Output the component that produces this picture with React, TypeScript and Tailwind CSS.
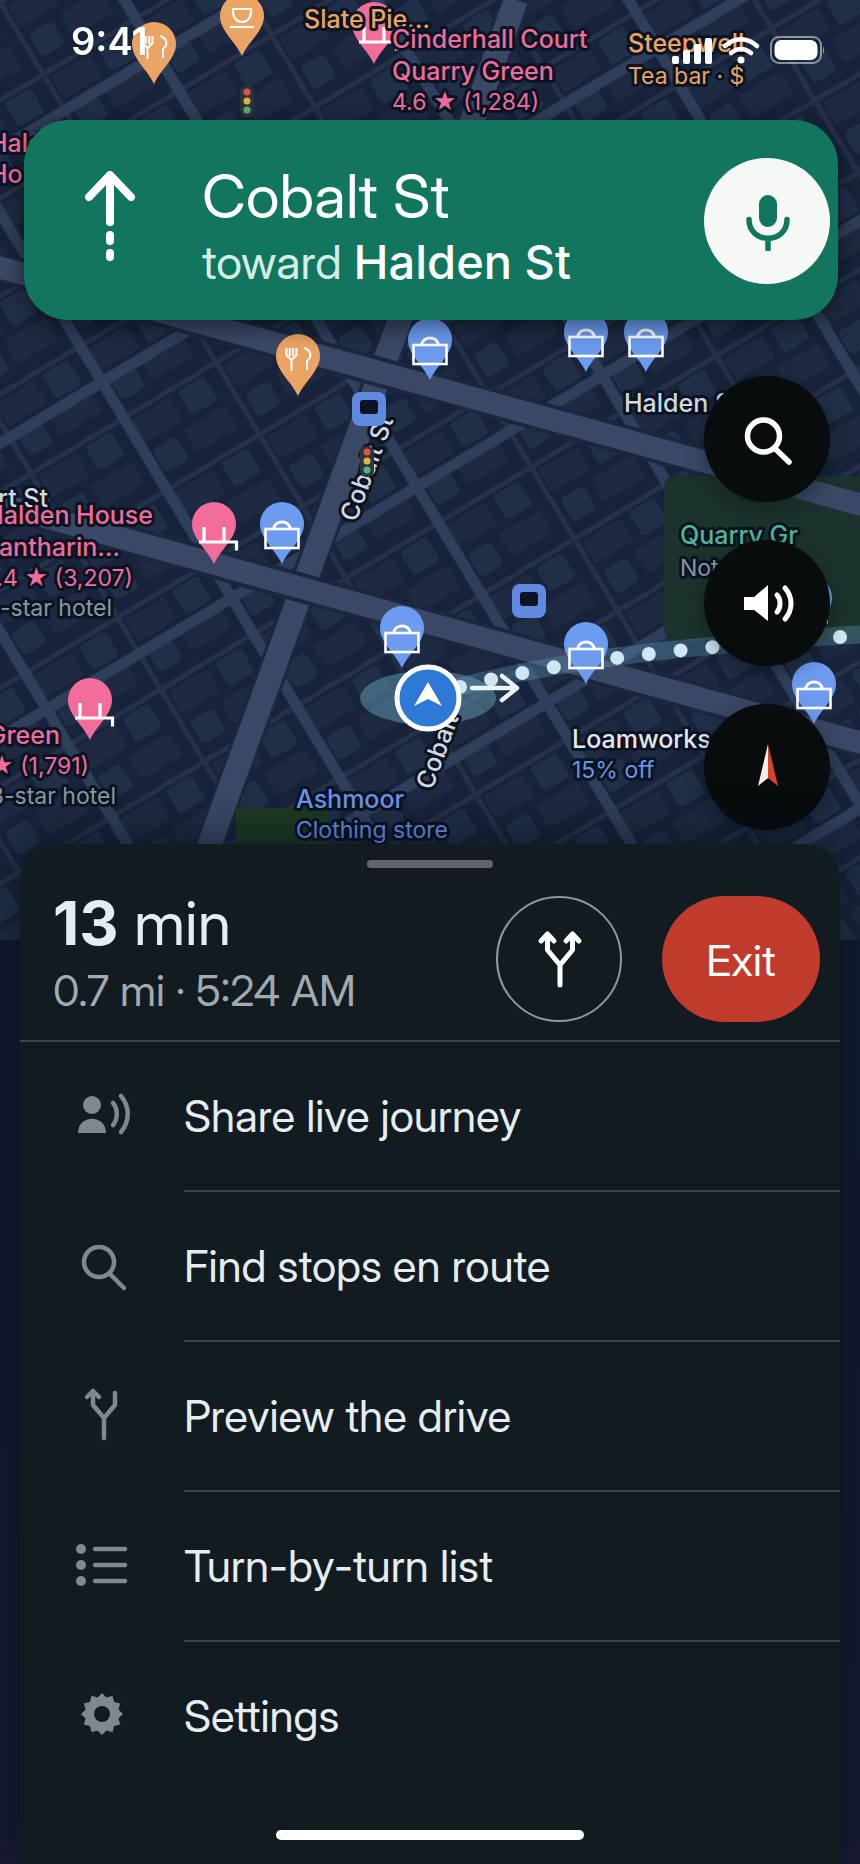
import React from "react";

type Pin = { kind: "food" | "cafe" | "hotel" | "shop"; x: number; y: number };

const PINS: Pin[] = [
  { kind: "food", x: 154, y: 22 },
  { kind: "cafe", x: 242, y: -6 },
  { kind: "hotel", x: 374, y: 2 },
  { kind: "food", x: 298, y: 334 },
  { kind: "shop", x: 430, y: 318 },
  { kind: "shop", x: 586, y: 310 },
  { kind: "shop", x: 646, y: 310 },
  { kind: "hotel", x: 214, y: 502 },
  { kind: "shop", x: 282, y: 502 },
  { kind: "shop", x: 402, y: 606 },
  { kind: "shop", x: 586, y: 622 },
  { kind: "shop", x: 810, y: 576 },
  { kind: "shop", x: 814, y: 662 },
  { kind: "hotel", x: 90, y: 678 },
];

const PIN_COLORS = { food: "#eba463", cafe: "#eba463", hotel: "#f26d9a", shop: "#6c9bf0" };

const LABELS = [
  { text: "Slate Pie…", x: 304, y: 28, size: 25, weight: 500, color: "#eba463" },
  { text: "Cinderhall Court", x: 392, y: 48, size: 25, weight: 500, color: "#ee6d9b" },
  { text: "Quarry Green", x: 392, y: 80, size: 25, weight: 500, color: "#ee6d9b" },
  { text: "4.6 ★ (1,284)", x: 392, y: 110, size: 23, weight: 400, color: "#ee6d9b" },
  { text: "Steepwell", x: 628, y: 52, size: 25, weight: 500, color: "#eba463" },
  { text: "Tea bar · $", x: 628, y: 84, size: 23, weight: 400, color: "#eba463" },
  { text: "Halden", x: -11, y: 152, size: 25, weight: 500, color: "#ee6d9b" },
  { text: "Ho", x: -11, y: 183, size: 25, weight: 500, color: "#ee6d9b" },
  { text: "Hart St", x: 48, y: 507, size: 25, weight: 500, color: "#d3d8df", end: true },
  { text: "Halden House", x: 153, y: 524, size: 25, weight: 500, color: "#ee6d9b", end: true },
  { text: "Xantharin…", x: 120, y: 556, size: 25, weight: 500, color: "#ee6d9b", end: true },
  { text: "4.4 ★ (3,207)", x: 133, y: 586, size: 23, weight: 400, color: "#ee6d9b", end: true },
  { text: "4-star hotel", x: 112, y: 616, size: 23, weight: 400, color: "#8d979f", end: true },
  { text: "Quarry Green", x: 60, y: 744, size: 25, weight: 500, color: "#ee6d9b", end: true },
  { text: "4.5 ★ (1,791)", x: 89, y: 774, size: 23, weight: 400, color: "#ee6d9b", end: true },
  { text: "3-star hotel", x: 116, y: 804, size: 23, weight: 400, color: "#8d979f", end: true },
  { text: "Halden St", x: 624, y: 412, size: 25, weight: 500, color: "#d3d8df" },
  { text: "Quarry Gr", x: 680, y: 544, size: 25, weight: 500, color: "#55b496" },
  { text: "Not busy", x: 680, y: 576, size: 23, weight: 400, color: "#8d979f" },
  { text: "Loamworks", x: 572, y: 748, size: 25, weight: 500, color: "#e3e7ee" },
  { text: "15% off", x: 572, y: 778, size: 23, weight: 400, color: "#6a94e6" },
  { text: "Ashmoor", x: 296, y: 808, size: 25, weight: 500, color: "#6a94e6" },
  { text: "Clothing store", x: 296, y: 838, size: 23, weight: 400, color: "#6a94e6" },
];

const GEAR_POINTS = Array.from({ length: 24 }, (_, i) => {
  const r = i % 2 === 0 ? 21 : 17;
  const a = (i * Math.PI) / 12;
  return `${(24 + r * Math.sin(a)).toFixed(1)},${(24 - r * Math.cos(a)).toFixed(1)}`;
}).join(" ");

function PinGlyph({ kind }: { kind: Pin["kind"] }) {
  if (kind === "shop") {
    return (
      <g strokeWidth="2.6">
        <rect x="-16.5" y="27" width="33" height="19" />
        <path d="M-8.5 27C-7 17.500 7 17.500 8.500 27" strokeWidth="3" />
      </g>
    );
  }
  if (kind === "hotel") {
    return <path d="M-10 25V40M10 25V40M-15 40H22.500V48.500" strokeWidth="3.2" />;
  }
  if (kind === "cafe") {
    return (
      <g strokeWidth="2.2">
        <path d="M-9 15H9C9.500 24 5 28 0 28S-9.500 24 -9 15Z" />
        <path d="M-12 33H12" />
      </g>
    );
  }
  return (
    <g strokeWidth="2">
      <path d="M-11.500 14V21L-6.500 26L-1.500 21V14M-8.200 14V22M-4.800 14V22M-6.500 25V37" />
      <path d="M6 14C13 16 14.500 23 9 27V36" />
    </g>
  );
}

function TrafficLight({ x, y }: { x: number; y: number }) {
  return (
    <g transform={`translate(${x} ${y})`}>
      <rect x="-7" y="-15" width="14" height="31" rx="6" fill="#2b3440" />
      <circle cy="-9" r="3.500" fill="#e4533f" />
      <circle r="3.500" fill="#e6b33c" />
      <circle cy="9" r="3.500" fill="#55b374" />
    </g>
  );
}

function Station({ x, y }: { x: number; y: number }) {
  return (
    <g transform={`translate(${x} ${y})`}>
      <rect width="34" height="34" rx="8" fill="#5f8ae0" />
      <rect x="8" y="8" width="18" height="14" rx="3" fill="#0a1424" />
    </g>
  );
}

function MapCanvas() {
  return (
    <svg
      viewBox="0 0 860 940"
      preserveAspectRatio="xMidYMin slice"
      className="h-full w-full font-['Inter',sans-serif]"
      role="img"
      aria-label="Map"
    >
      <defs>
        <pattern id="blocks" width="108" height="84" patternUnits="userSpaceOnUse" patternTransform="translate(102 382) rotate(-31) translate(0 42)">
          <rect width="108" height="84" fill="#17233a" />
          <rect x="5" y="6" width="45" height="26" rx="4" fill="#1d2a41" />
          <rect x="60" y="5" width="30" height="28" rx="4" fill="#202f47" />
          <rect x="8" y="42" width="27" height="27" rx="5" fill="#202f47" />
          <rect x="45" y="41" width="48" height="26" rx="4" fill="#1d2a41" />
          <path d="M0 0H108M0 84H108M0 0V84M108 0V84" stroke="#253149" strokeWidth="5" />
        </pattern>
        <pattern id="streets" width="216" height="252" patternUnits="userSpaceOnUse" patternTransform="translate(102 382) rotate(-31)">
          <path d="M0 0H216M0 252H216M0 0V252M216 0V252" stroke="#2f3e5b" strokeWidth="11" />
        </pattern>
      </defs>

      <rect width="860" height="940" fill="url(#blocks)" />
      <rect width="860" height="940" fill="url(#streets)" />
      <path d="M516 0L205 857" stroke="#1b2740" strokeWidth="30" />
      <path d="M516 0L205 857" stroke="#3a4865" strokeWidth="24" />
      <path d="M-20 262L880 510M-20 499L880 748" stroke="#1b2740" strokeWidth="30" />
      <rect x="664" y="476" width="240" height="164" rx="10" fill="#1c332d" />
      <path d="M-20 262L880 510M-20 499L880 748" stroke="#3a4865" strokeWidth="22" />
      <rect x="236" y="808" width="92" height="60" fill="#1d3a22" />

      <ellipse cx="428" cy="698" rx="68" ry="27" fill="#6fabc0" opacity="0.45" />
      <path d="M440 692C540 664 660 646 870 634" stroke="#5e9cb4" strokeOpacity="0.35" strokeWidth="18" fill="none" />
      <path d="M460 687C540 666 660 648 870 635" stroke="#cfe6f5" strokeWidth="14" strokeLinecap="round" strokeDasharray="0 32" fill="none" />

      <g fontSize="25" fontWeight="500" fill="#d3d8df" stroke="#0a1322" strokeWidth="6" strokeLinejoin="round" paintOrder="stroke">
        <text transform="translate(356 523) rotate(-70)">Cobalt St</text>
        <text transform="translate(432 791) rotate(-70)">Cobalt</text>
      </g>

      <Station x={352} y={392} />
      <Station x={512} y={584} />
      <TrafficLight x={247} y={101} />
      <TrafficLight x={367} y={461} />

      {PINS.map((pin) => (
        <g key={`${pin.x}-${pin.y}`} transform={`translate(${pin.x} ${pin.y})`}>
          <path d="M0 62C-6 48 -22 37 -22 22A22 22 0 0 1 22 22C22 37 6 48 0 62Z" fill={PIN_COLORS[pin.kind]} />
          <g fill="none" stroke="#fff">
            <PinGlyph kind={pin.kind} />
          </g>
        </g>
      ))}

      {LABELS.map((l) => (
        <text
          key={`${l.text}-${l.y}`}
          x={l.x}
          y={l.y}
          fontSize={l.size}
          fontWeight={l.weight}
          fill={l.color}
          textAnchor={l.end ? "end" : "start"}
          stroke="#0a1322"
          strokeWidth="6"
          strokeLinejoin="round"
          paintOrder="stroke"
        >
          {l.text}
        </text>
      ))}

      <path d="M472 688H516M502 676L517 688L502 700" fill="none" stroke="#eef3f6" strokeWidth="4.500" strokeLinecap="round" strokeLinejoin="round" />
      <circle cx="428" cy="698" r="31" fill="#2f79d6" stroke="#fff" strokeWidth="5" />
      <path d="M428 682L442 706L428 699L414 706Z" fill="#fff" />
    </svg>
  );
}

function StatusBar() {
  return (
    <div className="flex h-[120px] items-start justify-between pt-4 pr-9 pl-[71px] text-white">
      <span className="text-[38px] leading-[50px] font-semibold drop-shadow">9:41</span>
      <svg width="152" height="30" viewBox="0 0 152 30" className="mt-5" fill="#fff" aria-hidden="true">
        <rect x="0" y="20" width="7" height="8" rx="2" />
        <rect x="11" y="14" width="7" height="14" rx="2" />
        <rect x="22" y="8" width="7" height="20" rx="2" />
        <rect x="33" y="2" width="7" height="26" rx="2" />
        <g fill="none" stroke="#fff" strokeWidth="4.500" strokeLinecap="round">
          <path d="M53 10C63 1 75 1 85 10" />
          <path d="M59 17C65 11.500 73 11.500 79 17" />
        </g>
        <circle cx="69" cy="24" r="3.500" />
        <rect x="99" y="1" width="50" height="26" rx="8" fill="none" stroke="#fff" strokeOpacity="0.5" strokeWidth="2" />
        <rect x="102.500" y="4" width="43" height="20" rx="7" />
        <path d="M151 10C152.500 12 152.500 16 151 18Z" opacity="0.5" />
      </svg>
    </div>
  );
}

function DirectionBanner() {
  return (
    <header className="mr-[22px] ml-6 flex h-[200px] items-center rounded-[44px] bg-[#11765d] pt-0.5 pr-2 pl-[60px] text-white shadow-[0_6px_24px_rgba(0,0,0,0.5)]">
      <svg width="52" height="100" viewBox="0 0 52 100" fill="none" stroke="#fff" strokeWidth="8" strokeLinecap="round" strokeLinejoin="round" className="shrink-0" aria-hidden="true">
        <path d="M26 5V51M5 26L26 4L47 26" />
        <path d="M26 64V70M26 82V86" />
      </svg>
      <div className="ml-[66px] grow pt-2.5 font-['Inter_Display','Inter',sans-serif]">
        <h1 className="text-[61px] leading-[72px]">Cobalt St</h1>
        <p className="text-[47px] leading-[60px] text-[#d5ede5]">
          toward <span className="font-['Inter',sans-serif] font-medium text-white">Halden St</span>
        </p>
      </div>
      <button type="button" aria-label="Voice search" className="flex size-[126px] shrink-0 items-center justify-center rounded-full bg-[#f6f8f6]">
        <svg width="48" height="60" viewBox="0 0 48 60" aria-hidden="true">
          <rect x="16" y="4" width="18" height="32" rx="9" fill="#11765d" />
          <path d="M6 28.500C6 53.500 44 53.500 44 28.500M25 48V58" fill="none" stroke="#11765d" strokeWidth="5.500" strokeLinecap="round" />
        </svg>
      </button>
    </header>
  );
}

const FAB = "flex size-[126px] items-center justify-center rounded-full bg-[#090c0d] shadow-[0_6px_20px_rgba(0,0,0,0.35)]";

function MapControls() {
  return (
    <div className="mt-14 mr-[30px] flex flex-col items-end gap-[38px]">
      <button type="button" aria-label="Search" className={FAB}>
        <svg width="56" height="56" viewBox="0 0 56 56" fill="none" stroke="#fff" strokeWidth="5.500" strokeLinecap="round" aria-hidden="true">
          <circle cx="24.500" cy="25" r="16" />
          <path d="M36.500 38L50 51" />
        </svg>
      </button>
      <button type="button" aria-label="Sound" className={FAB}>
        <svg width="56" height="56" viewBox="0 0 56 56" aria-hidden="true">
          <path d="M5 22H15L29 10V46L15 35H5Z" fill="#fff" />
          <path d="M38 20C42 24 42 33 38 37M46 13C54 22 54 35 46 44" fill="none" stroke="#fff" strokeWidth="5" strokeLinecap="round" />
        </svg>
      </button>
      <button type="button" aria-label="Compass" className={FAB}>
        <svg width="56" height="56" viewBox="0 0 56 56" aria-hidden="true">
          <path d="M29 5L19 47L29 39Z" fill="#f2efe9" />
          <path d="M29 5L39 47L29 39Z" fill="#d8432f" />
        </svg>
      </button>
    </div>
  );
}

const ICON = { width: 52, height: 48, viewBox: "0 0 52 48", overflow: "visible", "aria-hidden": true } as const;

const MENU = [
  {
    label: "Share live journey",
    icon: (
      <svg {...ICON}>
        <circle cx="16" cy="12" r="9" fill="currentColor" />
        <path d="M2 40C2 21 30 21 30 40Z" fill="currentColor" />
        <path d="M37 10C42 16 42 26 37 32M45 3C54 14 54 28 45 39" fill="none" stroke="currentColor" strokeWidth="4.500" strokeLinecap="round" />
      </svg>
    ),
  },
  {
    label: "Find stops en route",
    icon: (
      <svg {...ICON} fill="none" stroke="currentColor" strokeWidth="4.500" strokeLinecap="round">
        <circle cx="23" cy="19" r="15" />
        <path d="M34 31L48 45" />
      </svg>
    ),
  },
  {
    label: "Preview the drive",
    icon: (
      <svg {...ICON} fill="none" stroke="currentColor" strokeWidth="4.500" strokeLinecap="round" strokeLinejoin="round">
        <path d="M28 45V25L17 12V-2M28 25L39 12V0M11 4L17 -2L23 4" />
      </svg>
    ),
  },
  {
    label: "Turn-by-turn list",
    icon: (
      <svg {...ICON}>
        <g fill="currentColor">
          <circle cx="5" cy="6" r="5" />
          <circle cx="5" cy="22" r="5" />
          <circle cx="5" cy="38" r="5" />
        </g>
        <path d="M19 6H49M19 22H49M19 38H49" stroke="currentColor" strokeWidth="4.500" strokeLinecap="round" />
      </svg>
    ),
  },
  {
    label: "Settings",
    icon: (
      <svg {...ICON}>
        <g transform="translate(2 -3)">
          <polygon points={GEAR_POINTS} fill="currentColor" />
          <circle cx="24" cy="24" r="8" fill="#111b20" />
        </g>
      </svg>
    ),
  },
];

function TripSheet() {
  return (
    <section className="relative mx-5 mt-3.5 flex grow flex-col rounded-t-[36px] bg-[#111b20] font-['Inter_Display','Inter',sans-serif] text-[#e6edf1] shadow-[0_-8px_40px_rgba(5,12,24,0.5)]">
      <div className="mx-auto mt-4 h-2 w-[126px] rounded-full bg-[#62666b]" />
      <div className="flex items-start border-b-2 border-[#3a4347] pt-7 pr-5 pb-[18px] pl-[33px]">
        <div className="grow">
          <p className="text-[61px] leading-[54px]">
            <strong className="font-['Inter',sans-serif] font-bold">13</strong> min
          </p>
          <p className="mt-3 text-[43px] leading-[56px] text-[#a0aab0]">0.7 mi · 5:24 AM</p>
        </div>
        <button type="button" aria-label="Alternate routes" className="flex size-[126px] shrink-0 items-center justify-center rounded-full border-2 border-[#8f989d]">
          <svg width="48" height="60" viewBox="0 0 48 60" fill="none" stroke="#fff" strokeWidth="5" strokeLinecap="round" strokeLinejoin="round" aria-hidden="true">
            <path d="M25 56V36L12.500 21V6M25 36L37.500 21V6M6 12L12.500 5L19 12M31 12L37.500 5L44 12" />
          </svg>
        </button>
        <button type="button" className="ml-10 h-[126px] w-[158px] shrink-0 rounded-full bg-[#c03b2c] pt-0.5 text-[43px] text-white">
          Exit
        </button>
      </div>
      <ul>
        {MENU.map((item) => (
          <li key={item.label} className="group">
            <button type="button" className="flex h-[150px] w-full items-stretch text-left">
              <span className="flex w-[164px] items-center pl-14 text-[#7f888c]">{item.icon}</span>
              <span className="flex grow items-center border-b-2 border-[#3a4347] text-[44px] group-last:border-transparent">
                {item.label}
              </span>
            </button>
          </li>
        ))}
      </ul>
      <div className="mx-auto mt-auto mb-6 h-2.5 w-[308px] rounded-full bg-white" />
    </section>
  );
}

export default function App() {
  return (
    <main className="relative flex min-h-screen flex-col overflow-hidden bg-linear-to-b from-[#121a2e] from-60% to-[#171a30] font-['Inter',sans-serif]">
      <div className="absolute inset-x-0 top-0 h-[940px]">
        <MapCanvas />
      </div>
      <div className="relative flex grow flex-col">
        <StatusBar />
        <DirectionBanner />
        <MapControls />
        <TripSheet />
      </div>
    </main>
  );
}
